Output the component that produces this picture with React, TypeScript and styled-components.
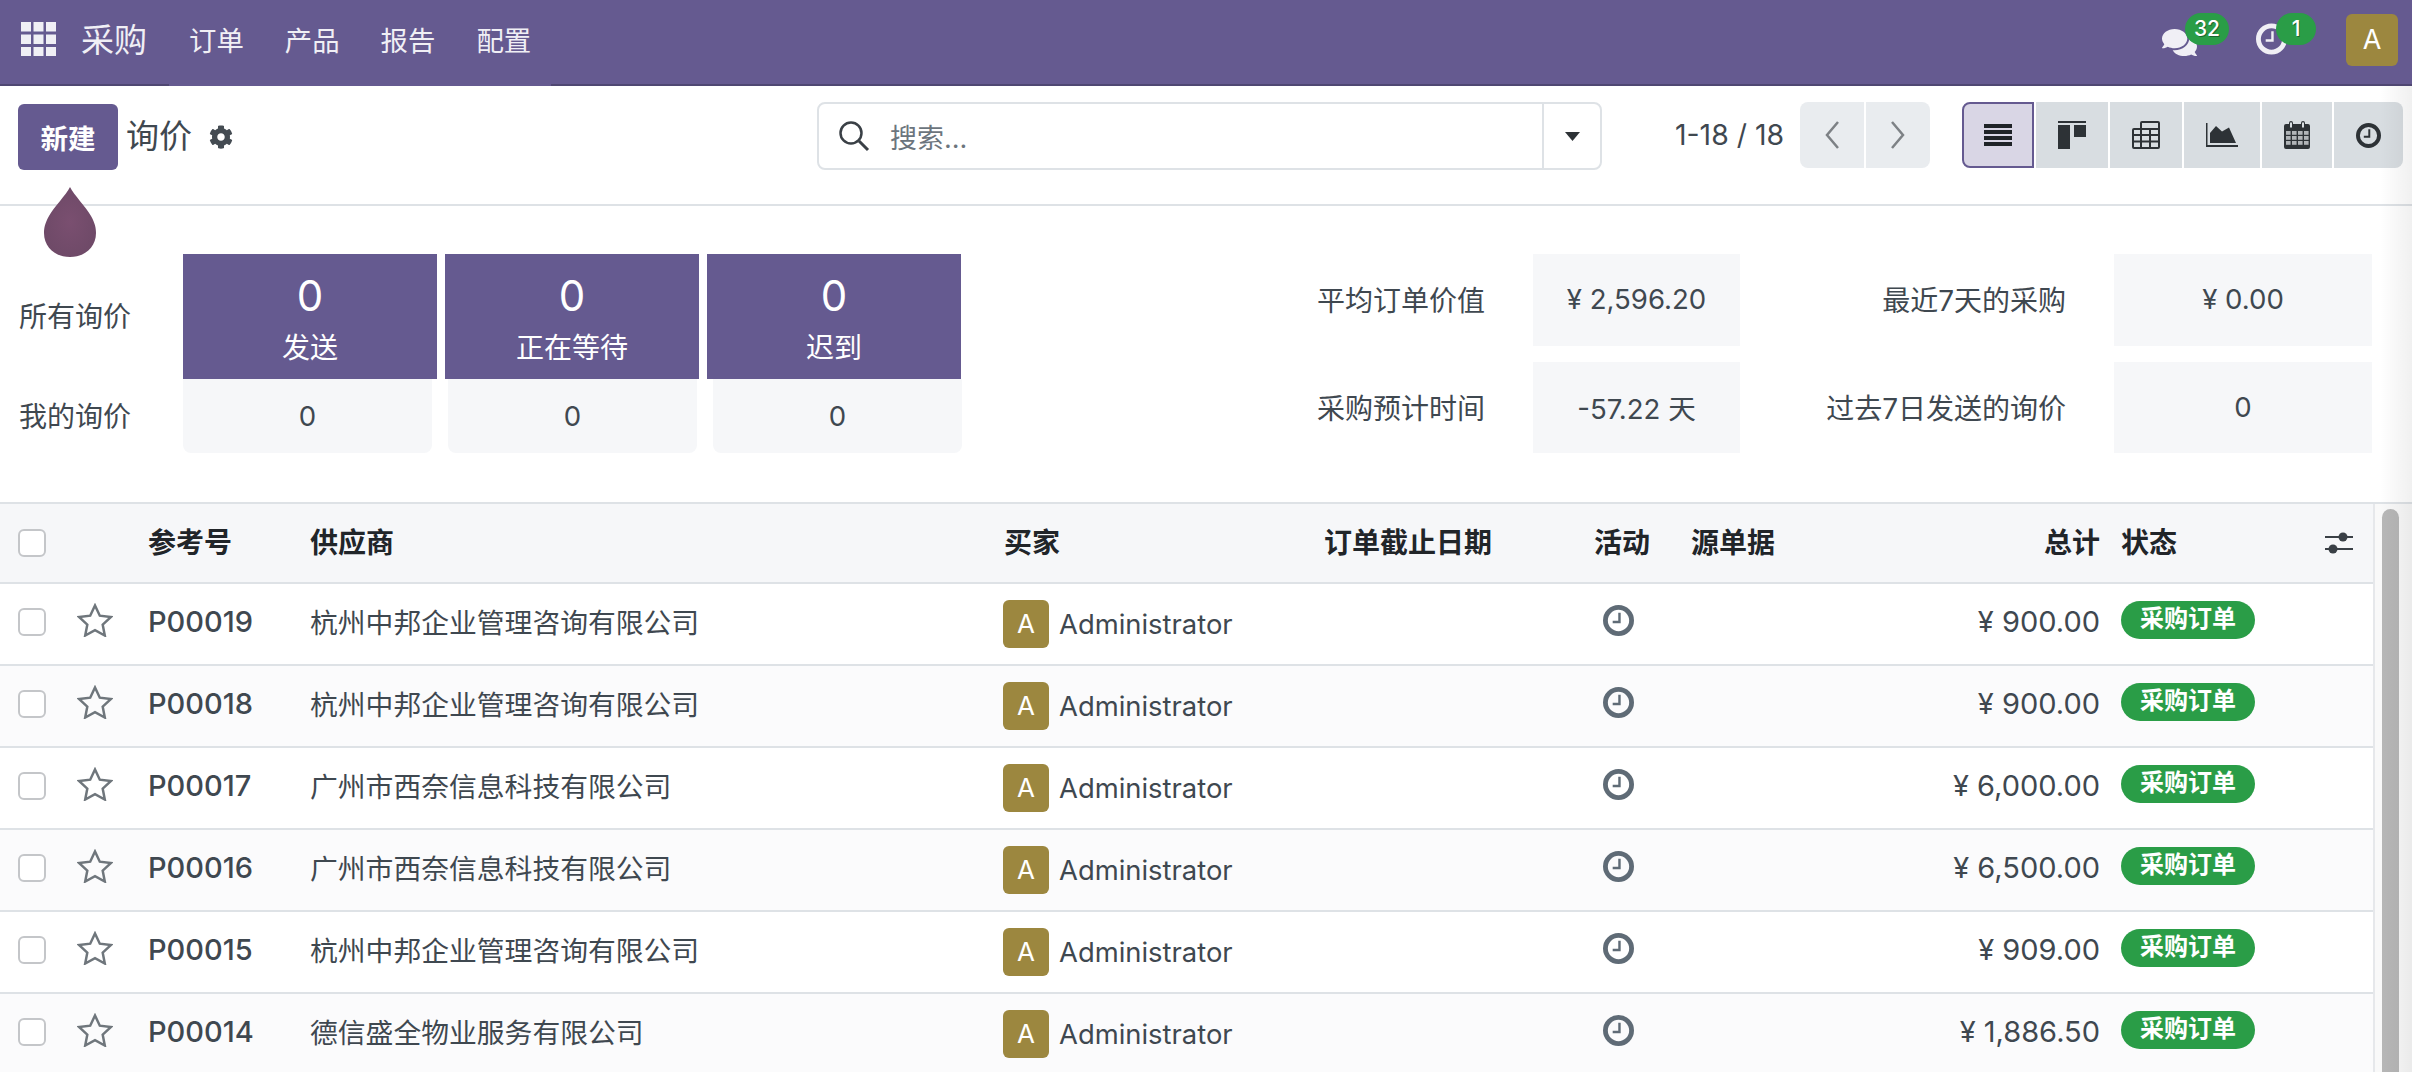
import React from 'react'
import styled, { createGlobalStyle } from 'styled-components'
import { FaCog, FaComments } from 'react-icons/fa'

const PURPLE = '#655a90'
const LINE = '#dee2e6'
const TILE = '#f6f7f9'
const TEXT = '#3f4850'
const DARK = '#212529'
const GREEN = '#2a9d47'
const OLIVE = '#9c873f'

const GlobalStyle = createGlobalStyle`
  html, body {
    margin: 0;
    height: 100%;
    overflow: hidden;
    background: #fff;
  }
  body {
    font-family: Inter, "Noto Sans CJK SC", sans-serif;
    font-size: 28px;
    color: ${TEXT};
  }
  * {
    box-sizing: border-box;
  }
`

const Page = styled.div`
  position: relative;
  width: 2412px;
  height: 1072px;
  overflow: hidden;
`

const EdgeShade = styled.div`
  position: absolute;
  top: 86px;
  right: 0;
  bottom: 0;
  width: 32px;
  background: linear-gradient(to right, rgba(0, 0, 0, 0), rgba(0, 0, 0, 0.06));
  pointer-events: none;
`

const Drop = styled.svg`
  position: absolute;
  top: 187px;
  left: 44px;
  width: 52px;
  height: 70px;
`

const Navbar = styled.nav`
  display: flex;
  align-items: stretch;
  height: 86px;
  padding-left: 21px;
  padding-right: 14px;
  background: ${PURPLE};
  border-bottom: 2px solid #4f4772;
  color: #f0eff5;
`

const AppsIcon = styled.svg`
  width: 35px;
  height: 34px;
  margin-top: 22px;
  fill: #f0eff5;
`

const Brand = styled.div`
  margin-left: 25px;
  width: 66px;
  font-size: 33px;
  line-height: 80px;
`

const Menu = styled.div`
  display: flex;
  gap: 41px;
  height: 86px;
  margin-left: 22px;
  padding: 0 20px 0 20px;
  background: ${PURPLE};
`

const MenuItem = styled.div`
  font-size: 27.4px;
  line-height: 82px;
`

const Systray = styled.div`
  display: flex;
  margin-left: auto;
`

const Notif = styled.div`
  position: relative;
  width: ${({ $w }: { $w: number }) => $w}px;
  height: 32px;
  margin-top: 23px;
  margin-right: 59px;
`

const NotifBadge = styled.span`
  position: absolute;
  top: -10px;
  left: ${({ $left }: { $left: number; $w: number }) => $left}px;
  width: ${({ $w }: { $w: number }) => $w}px;
  height: 32px;
  border-radius: 16px;
  background: ${GREEN};
  color: #fff;
  font-size: 21px;
  font-weight: 500;
  line-height: 32px;
  text-align: center;
  text-shadow: 1px 1px 0 rgba(0, 0, 0, 0.35);
`

const UserAvatar = styled.div`
  width: 52px;
  height: 52px;
  margin-top: 14px;
  border-radius: 6px;
  background: ${OLIVE};
  color: #fff;
  font-size: 27px;
  line-height: 52px;
  text-align: center;
`

const ControlPanel = styled.header`
  display: grid;
  grid-template-columns: 817px 785px 1fr;
  height: 120px;
  padding-top: 16px;
  border-bottom: 2px solid ${LINE};
`

const TitleGroup = styled.div`
  display: flex;
  align-items: flex-start;
  padding-left: 18px;
  padding-top: 2px;
`

const NewButton = styled.button`
  width: 100px;
  height: 66px;
  padding: 0;
  border: 0;
  border-radius: 6px;
  background: ${PURPLE};
  color: #fff;
  font-family: inherit;
  font-size: 27.6px;
  font-weight: 700;
`

const Title = styled.div`
  margin-left: 8px;
  font-size: 33px;
  line-height: 64px;
  color: ${TEXT};
`

const Gear = styled(FaCog)`
  width: 24px;
  height: 24px;
  margin: 21px 0 0 17px;
  color: #444b52;
`

const SearchBox = styled.div`
  display: flex;
  align-items: center;
  height: 68px;
  border: 2px solid ${LINE};
  border-radius: 8px;
`

const SearchIcon = styled.svg`
  width: 32px;
  height: 32px;
  margin-left: 19px;
`

const SearchText = styled.div`
  flex: 1;
  margin-left: 20px;
  color: #6c757d;
  font-size: 27px;
`

const SearchCaret = styled.div`
  display: flex;
  align-items: center;
  justify-content: center;
  align-self: stretch;
  width: 58px;
  border-left: 2px solid ${LINE};
`

const PagerGroup = styled.div`
  display: flex;
  align-items: flex-start;
  padding-left: 73px;
`

const PagerText = styled.div`
  width: 125px;
  line-height: 66px;
  white-space: nowrap;
  font-size: 28.4px;
`

const PagerButton = styled.div`
  display: flex;
  align-items: center;
  justify-content: center;
  width: ${({ $w }: { $w: number; $right?: boolean }) => $w}px;
  height: 66px;
  margin-right: ${({ $right }) => ($right ? 0 : 2)}px;
  border-radius: ${({ $right }) => ($right ? '0 8px 8px 0' : '8px 0 0 8px')};
  background: #e9ecef;
`

const ViewSwitch = styled.div`
  display: flex;
  gap: 2px;
  margin-left: 32px;
`

const ViewButton = styled.div<{ $w: number; $active?: boolean; $last?: boolean }>`
  display: flex;
  align-items: center;
  justify-content: center;
  width: ${({ $w }) => $w}px;
  height: 66px;
  background: ${({ $active }) => ($active ? '#d9d6e5' : '#d8dde1')};
  border: ${({ $active }) => ($active ? `2px solid ${PURPLE}` : '0')};
  border-radius: ${({ $active, $last }) => ($active ? '8px 0 0 8px' : $last ? '0 8px 8px 0' : '0')};
  color: #2d3236;
`

const Dashboard = styled.section`
  display: flex;
  height: 296px;
  padding: 48px 0 0 19px;
`

const DashLeft = styled.div`
  width: 942px;
`

const DashRow = styled.div`
  display: flex;
  align-items: stretch;
`

const RowLabel = styled.div`
  display: flex;
  align-items: center;
  width: 164px;
  flex-shrink: 0;
  padding-bottom: 3px;
`

const PurpleTiles = styled.div`
  display: flex;
  gap: 8px;
`

const PurpleTile = styled.div`
  display: flex;
  flex-direction: column;
  align-items: center;
  width: 254px;
  height: 125px;
  padding-top: 16px;
  background: ${PURPLE};
  color: #fff;
`

const TileCount = styled.div`
  font-size: 42px;
  line-height: 52px;
`

const TileName = styled.div`
  margin-top: 8px;
  line-height: 36px;
`

const LightTiles = styled.div`
  display: flex;
  gap: 16px;
`

const LightTile = styled.div`
  width: 249px;
  height: 74px;
  border-radius: 0 0 8px 8px;
  background: ${TILE};
  font-size: 27.6px;
  line-height: 74px;
  text-align: center;
`

const DashRight = styled.div`
  display: grid;
  grid-template-columns: 293px 207px 374px 258px;
  grid-template-rows: 92px 91px;
  row-gap: 16px;
  margin-left: 279px;
`

const StatLabel = styled.div`
  align-self: center;
  padding-right: 48px;
  padding-bottom: 2px;
  text-align: right;
`

const StatValue = styled.div`
  display: flex;
  align-items: center;
  justify-content: center;
  padding-bottom: 2px;
  background: ${TILE};
  font-size: 27.6px;
`

const TablePane = styled.div`
  display: flex;
  border-top: 2px solid ${LINE};
`

const ListTable = styled.div`
  width: 2375px;
  flex-shrink: 0;
  border-right: 2px solid #e6e8eb;
`

const ScrollGutter = styled.div`
  flex: 1;
  padding: 5px 0 0 7px;
  background: #f9f9f9;
`

const ScrollThumb = styled.div`
  width: 17px;
  height: 600px;
  border-radius: 9px;
  background: #b7b7b7;
`

const TableRow = styled.div<{ $head?: boolean; $even?: boolean }>`
  display: grid;
  grid-template-columns: 79px 69px 162px 694px 320px 256px 84px 236px 200px 200px 1fr;
  align-items: center;
  height: ${({ $head }) => ($head ? 80 : 82)}px;
  padding-bottom: ${({ $head }) => ($head ? 0 : 4)}px;
  border-bottom: 2px solid ${LINE};
  background: ${({ $head, $even }) => ($head ? TILE : $even ? '#fbfbfc' : '#fff')};
  color: ${({ $head }) => ($head ? DARK : TEXT)};
  font-weight: ${({ $head }) => ($head ? 600 : 400)};
`

const HeadText = styled.div<{ $align?: string; $pad?: number }>`
  margin-bottom: 4px;
  padding-left: ${({ $pad }) => $pad ?? 0}px;
  text-align: ${({ $align }) => $align ?? 'left'};
  white-space: nowrap;
`

const Check = styled.span`
  display: block;
  width: 28px;
  height: 28px;
  margin-left: 18px;
  border: 2px solid #c4c6c9;
  border-radius: 6px;
  background: #fff;
`

const StarIcon = styled.svg`
  width: 36px;
  height: 34px;
  margin-left: -2px;
  margin-bottom: 4px;
`

const RefCell = styled.div`
  margin-bottom: 1px;
  font-size: 29px;
  font-weight: 500;
`

const VendorCell = styled.div`
  margin-bottom: 3px;
  font-size: 27.8px;
`

const BuyerCell = styled.div`
  display: flex;
  align-items: center;
  gap: 10px;
  margin-top: 4px;
  margin-left: -1px;
  font-size: 27.4px;
`

const RowAvatar = styled.span`
  width: 46px;
  height: 48px;
  border-radius: 6px;
  background: ${OLIVE};
  color: #fff;
  font-size: 26px;
  line-height: 48px;
  text-align: center;
`

const ActivityClock = styled.svg`
  display: block;
  width: 31px;
  height: 31px;
  margin: 0 auto 4px;
  position: relative;
  left: -4px;
`

const AmountCell = styled.div`
  margin-bottom: 1px;
  font-size: 29px;
  text-align: right;
`

const StatusCell = styled.div`
  padding-left: 21px;
`

const StatusPill = styled.span`
  display: block;
  width: 134px;
  height: 38px;
  margin-bottom: 4px;
  border-radius: 19px;
  background: ${GREEN};
  color: #fff;
  font-size: 24px;
  font-weight: 700;
  line-height: 36px;
  text-align: center;
`

const SlidersIcon = styled.svg`
  display: block;
  width: 28px;
  height: 24px;
  margin-left: 25px;
`

const rows = [
  { ref: 'P00019', vendor: '杭州中邦企业管理咨询有限公司', total: '¥ 900.00' },
  { ref: 'P00018', vendor: '杭州中邦企业管理咨询有限公司', total: '¥ 900.00' },
  { ref: 'P00017', vendor: '广州市西奈信息科技有限公司', total: '¥ 6,000.00' },
  { ref: 'P00016', vendor: '广州市西奈信息科技有限公司', total: '¥ 6,500.00' },
  { ref: 'P00015', vendor: '杭州中邦企业管理咨询有限公司', total: '¥ 909.00' },
  { ref: 'P00014', vendor: '德信盛全物业服务有限公司', total: '¥ 1,886.50' }
]

const Clock = ({ color, ring = 5 }: { color: string; ring?: number }) => (
  <>
    <circle cx="16" cy="16" r={16 - ring / 2} fill="none" stroke={color} strokeWidth={ring} />
    <path d="M17 8v9.500H10" fill="none" stroke={color} strokeWidth="2.500" />
  </>
)

const Apps = () => (
  <AppsIcon viewBox="0 0 35 34">
    {[0, 12.5, 25].map((y) =>
      [0, 12.5, 25].map((x) => <rect key={`${x}-${y}`} x={x} y={y} width="10" height="9.5" />)
    )}
  </AppsIcon>
)

const ListGlyph = () => (
  <svg width="28" height="22" viewBox="0 0 28 22" fill="#1f2327">
    <rect y="0" width="28" height="4" />
    <rect y="6" width="28" height="4" />
    <rect y="12" width="28" height="4" />
    <rect y="18" width="28" height="4" />
  </svg>
)

const KanbanGlyph = () => (
  <svg width="28" height="28" viewBox="0 0 28 28" fill="currentColor">
    <rect width="28" height="2" />
    <rect y="4" width="12" height="24" />
    <rect x="16" y="4" width="12" height="12" />
  </svg>
)

const PivotGlyph = () => (
  <svg width="28" height="28" viewBox="0 0 28 28" fill="none" stroke="currentColor" strokeWidth="2">
    <path d="M9 8V2a1 1 0 0 1 1-1h16a1 1 0 0 1 1 1v24a1 1 0 0 1-1 1H2a1 1 0 0 1-1-1V9a1 1 0 0 1 1-1h25" />
    <path d="M1 14h26M1 20.500h26M9 8v19M18 8v19" />
  </svg>
)

const GraphGlyph = () => (
  <svg width="32" height="24" viewBox="0 0 32 24" fill="currentColor">
    <path d="M0 0h1.500v22H32v2H0z" />
    <path d="M4 20V10l6-7 6 5.500 7-4L30 20z" />
  </svg>
)

const CalendarGlyph = () => (
  <svg width="26" height="28" viewBox="0 0 26 28" fill="currentColor">
    <path d="M2 3h3V2a2 2 0 0 1 4 0v1h8V2a2 2 0 0 1 4 0v1h3a2 2 0 0 1 2 2v21a2 2 0 0 1-2 2H2a2 2 0 0 1-2-2V5a2 2 0 0 1 2-2z" />
    <path d="M6 1.500h2v5H6zM18 1.500h2v5h-2z" fill="#d8dde1" />
    <g fill="#b0b4b7">
      {[2, 8, 14, 20].map((x) =>
        [10, 15, 20].map((y) => <rect key={`${x}-${y}`} x={x} y={y} width="4.600" height="3.800" />)
      )}
    </g>
  </svg>
)

const Chevron = ({ d }: { d: string }) => (
  <svg width="16" height="28" viewBox="0 0 16 28" fill="none" stroke="#7d8185" strokeWidth="2.500">
    <path d={d} />
  </svg>
)

export default function App() {
  return (
    <Page>
      <GlobalStyle />
      <Navbar>
        <Apps />
        <Brand>采购</Brand>
        <Menu>
          <MenuItem>订单</MenuItem>
          <MenuItem>产品</MenuItem>
          <MenuItem>报告</MenuItem>
          <MenuItem>配置</MenuItem>
        </Menu>
        <Systray>
          <Notif $w={35}>
            <FaComments size={35} color="#f0eff5" style={{ marginTop: 2 }} />
            <NotifBadge $left={23} $w={44}>
              32
            </NotifBadge>
          </Notif>
          <Notif $w={31}>
            <svg width="31" height="32" viewBox="0 0 32 32">
              <Clock color="#f0eff5" />
            </svg>
            <NotifBadge $left={20} $w={40}>
              1
            </NotifBadge>
          </Notif>
          <UserAvatar>A</UserAvatar>
        </Systray>
      </Navbar>

      <ControlPanel>
        <TitleGroup>
          <NewButton>新建</NewButton>
          <Title>询价</Title>
          <Gear />
        </TitleGroup>
        <SearchBox>
          <SearchIcon viewBox="0 0 32 32" fill="none" stroke="#3a4046" strokeWidth="2.500">
            <circle cx="13" cy="13" r="10.500" />
            <path d="M21 21l9 9" strokeWidth="3" />
          </SearchIcon>
          <SearchText>搜索...</SearchText>
          <SearchCaret>
            <svg width="15" height="9" viewBox="0 0 15 9" fill="#2d3236">
              <path d="M0 0h15L7.500 9z" />
            </svg>
          </SearchCaret>
        </SearchBox>
        <PagerGroup>
          <PagerText>1-18 / 18</PagerText>
          <PagerButton $w={64}>
            <Chevron d="M14 1L3 14l11 13" />
          </PagerButton>
          <PagerButton $w={64} $right>
            <Chevron d="M2 1l11 13L2 27" />
          </PagerButton>
          <ViewSwitch>
            <ViewButton $w={72} $active>
              <ListGlyph />
            </ViewButton>
            <ViewButton $w={72}>
              <KanbanGlyph />
            </ViewButton>
            <ViewButton $w={72}>
              <PivotGlyph />
            </ViewButton>
            <ViewButton $w={76}>
              <GraphGlyph />
            </ViewButton>
            <ViewButton $w={70}>
              <CalendarGlyph />
            </ViewButton>
            <ViewButton $w={69} $last>
              <svg width="25" height="25" viewBox="0 0 32 32">
                <Clock color="#2d3236" />
              </svg>
            </ViewButton>
          </ViewSwitch>
        </PagerGroup>
      </ControlPanel>

      <Dashboard>
        <DashLeft>
          <DashRow>
            <RowLabel>所有询价</RowLabel>
            <PurpleTiles>
              {['发送', '正在等待', '迟到'].map((name) => (
                <PurpleTile key={name}>
                  <TileCount>0</TileCount>
                  <TileName>{name}</TileName>
                </PurpleTile>
              ))}
            </PurpleTiles>
          </DashRow>
          <DashRow>
            <RowLabel>我的询价</RowLabel>
            <LightTiles>
              <LightTile>0</LightTile>
              <LightTile>0</LightTile>
              <LightTile>0</LightTile>
            </LightTiles>
          </DashRow>
        </DashLeft>
        <DashRight>
          <StatLabel>平均订单价值</StatLabel>
          <StatValue>¥ 2,596.20</StatValue>
          <StatLabel>最近7天的采购</StatLabel>
          <StatValue>¥ 0.00</StatValue>
          <StatLabel>采购预计时间</StatLabel>
          <StatValue>-57.22 天</StatValue>
          <StatLabel>过去7日发送的询价</StatLabel>
          <StatValue>0</StatValue>
        </DashRight>
      </Dashboard>

      <TablePane>
        <ListTable>
          <TableRow $head>
            <Check />
            <span />
            <HeadText>参考号</HeadText>
            <HeadText>供应商</HeadText>
            <HeadText>买家</HeadText>
            <HeadText>订单截止日期</HeadText>
            <HeadText $align="center">活动</HeadText>
            <HeadText $pad={27}>源单据</HeadText>
            <HeadText $align="right">总计</HeadText>
            <HeadText $pad={21}>状态</HeadText>
            <SlidersIcon viewBox="0 0 28 24" fill="#3a4046">
              <rect y="5" width="28" height="2" />
              <rect y="17" width="28" height="2" />
              <circle cx="18" cy="6" r="4.500" />
              <circle cx="8" cy="18" r="4.500" />
            </SlidersIcon>
          </TableRow>
          {rows.map((row, i) => (
            <TableRow key={row.ref} $even={i % 2 === 1}>
              <Check />
              <StarIcon viewBox="0 0 36 34" fill="none" stroke="#6f767c" strokeWidth="2.500">
                <path d="M18 2.500l4.800 10.200 11 1.400-8.100 7.600 2.100 10.800L18 27.200 8.200 32.500l2.100-10.800-8.100-7.600 11-1.400z" />
              </StarIcon>
              <RefCell>{row.ref}</RefCell>
              <VendorCell>{row.vendor}</VendorCell>
              <BuyerCell>
                <RowAvatar>A</RowAvatar>
                Administrator
              </BuyerCell>
              <span />
              <div>
                <ActivityClock viewBox="0 0 32 32">
                  <Clock color="#5f6b76" />
                </ActivityClock>
              </div>
              <span />
              <AmountCell>{row.total}</AmountCell>
              <StatusCell>
                <StatusPill>采购订单</StatusPill>
              </StatusCell>
              <span />
            </TableRow>
          ))}
        </ListTable>
        <ScrollGutter>
          <ScrollThumb />
        </ScrollGutter>
      </TablePane>
      <EdgeShade />
      <Drop viewBox="0 0 52 70">
        <defs>
          <radialGradient id="dropFill">
            <stop offset="0%" stopColor="#7a4f70" />
            <stop offset="100%" stopColor="#6f4a68" />
          </radialGradient>
        </defs>
        <path
          d="M26 0C22 8 10 20 5 29C1 36 0 41 0 46C0 60 11 70 26 70C41 70 52 60 52 46C52 41 51 36 47 29C42 20 30 8 26 0Z"
          fill="url(#dropFill)"
        />
      </Drop>
    </Page>
  )
}
